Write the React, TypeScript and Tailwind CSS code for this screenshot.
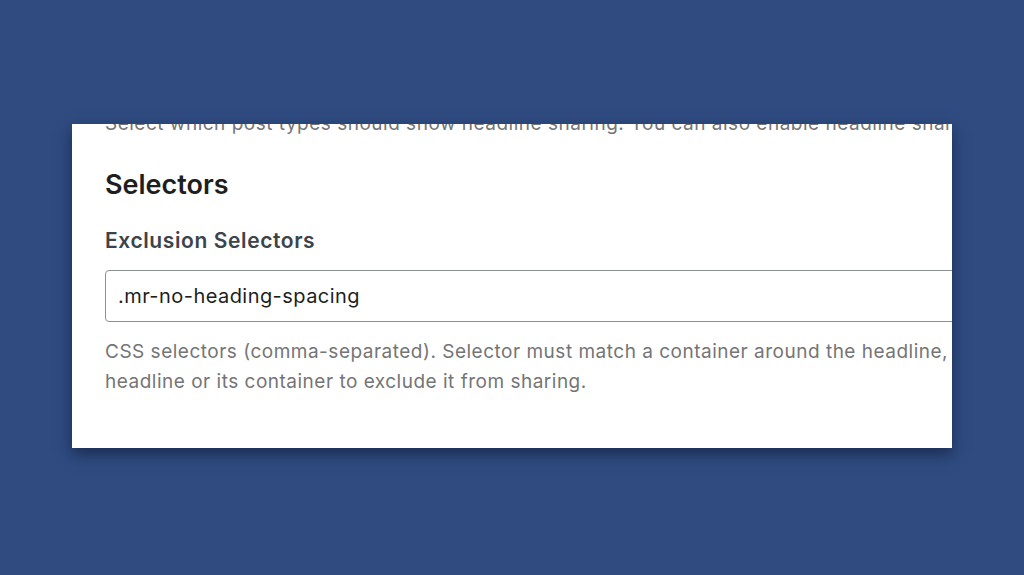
export default function App() {
  const font = { fontFamily: "Inter, 'Noto Sans', sans-serif" };

  return (
    <div className="flex h-[575px] w-full bg-[#2f4b80]" style={font}>
      <div className="ml-[72px] mt-[124px] h-[324px] w-[880px] overflow-hidden bg-white shadow-[0_6px_14px_rgba(10,20,45,0.55)]">
        <div className="w-[1200px] pl-[33px]">
          <p className="-mt-[15px] text-[19px] leading-[30px] tracking-[0.5px] whitespace-nowrap text-[#757575]">
            Select which post types should show headline sharing. You can also enable headline sharing on individual posts.
          </p>

          <h2 className="mt-[28px] text-[27px] leading-[36px] font-semibold text-[#1e1e1e]">
            Selectors
          </h2>

          <label
            htmlFor="exclusion-selectors"
            className="mt-[24px] block text-[21px] leading-[28px] font-semibold tracking-[0.6px] text-[#3c434a]"
          >
            Exclusion Selectors
          </label>

          <input
            id="exclusion-selectors"
            defaultValue=".mr-no-heading-spacing"
            className="mt-[15px] block h-[52px] w-[1000px] rounded-[4px] border border-[#8c8f94] bg-white px-[12px] text-[20px] tracking-[0.45px] text-[#1e1e1e] outline-none"
          />

          <p className="mt-[15px] w-[950px] text-[19px] leading-[30px] tracking-[0.5px] text-[#757575]">
            CSS selectors (comma-separated). Selector must match a container around the headline, or the
            headline or its container to exclude it from sharing.
          </p>
        </div>
      </div>
    </div>
  );
}
